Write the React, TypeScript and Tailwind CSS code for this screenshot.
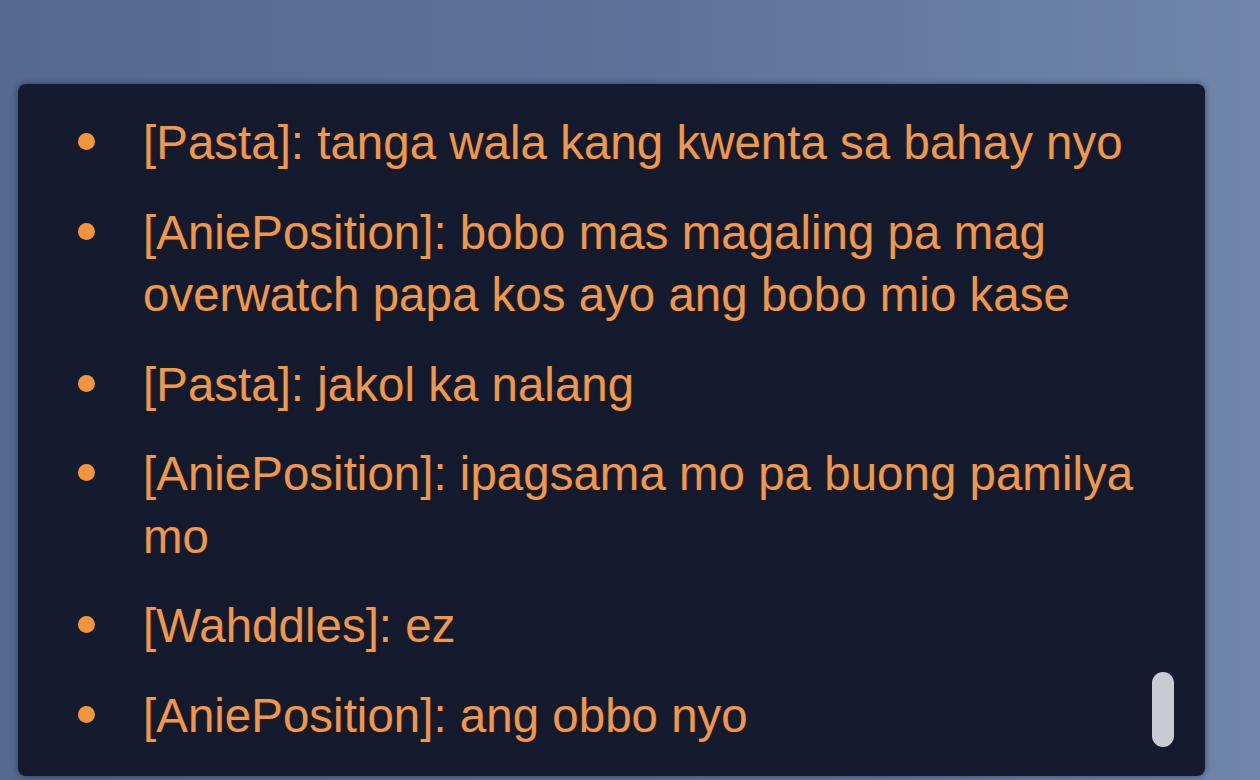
const messages = [
  { user: "Pasta", text: "tanga wala kang kwenta sa bahay nyo" },
  { user: "AniePosition", text: "bobo mas magaling pa mag overwatch papa kos ayo ang bobo mio kase" },
  { user: "Pasta", text: "jakol ka nalang" },
  { user: "AniePosition", text: "ipagsama mo pa buong pamilya mo" },
  { user: "Wahddles", text: "ez" },
  { user: "AniePosition", text: "ang obbo nyo" },
];

export default function App() {
  return (
    <div className="h-[780px] w-[1260px] overflow-hidden bg-gradient-to-r from-[#556991] via-[#5d7299] to-[#6f86aa] pt-[84px] pl-[18px] font-['Liberation_Sans',Arial,sans-serif]">
      {/* chat panel */}
      <div className="relative h-[692px] w-[1187px] rounded-lg bg-[#141b2f] shadow-[0_0_6px_rgba(10,15,35,0.5)]">
        <ul className="flex flex-col gap-[27px] pt-[28px] pl-[60px] pr-[50px]">
          {messages.map((m, i) => (
            <li key={i} className="flex items-start">
              <span className="mt-[21px] h-[17px] w-[17px] shrink-0 rounded-full bg-[#f2953f]" />
              <span className="ml-[48px] text-[47.5px] leading-[62.5px] text-[#e59a5a] [text-shadow:0_0_3px_rgba(70,28,0,1),0_1px_2px_rgba(50,20,0,0.8)]">
                {`[${m.user}]: ${m.text}`}
              </span>
            </li>
          ))}
        </ul>
        {/* scrollbar thumb */}
        <div className="absolute left-[1134px] top-[588px] h-[75px] w-[22px] rounded-full bg-[#c9cbd3]" />
      </div>
    </div>
  );
}
